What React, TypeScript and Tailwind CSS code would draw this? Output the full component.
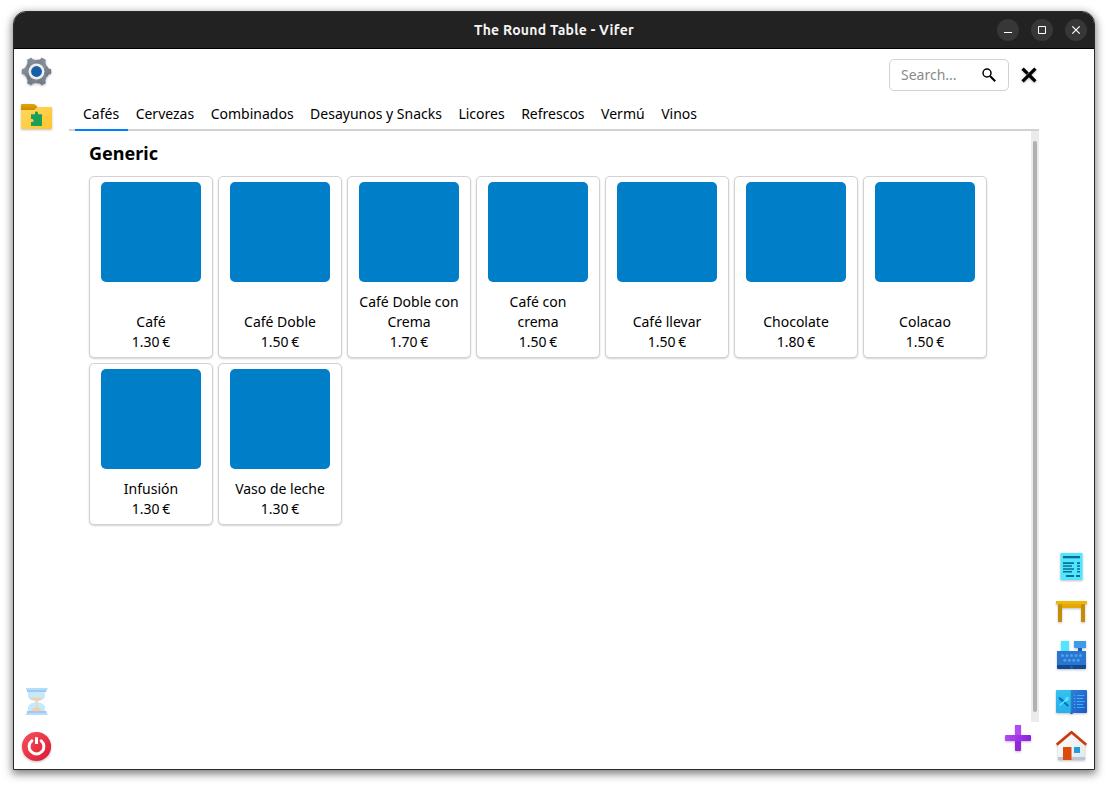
import type { ReactNode } from 'react';

const categories = ['Cafés', 'Cervezas', 'Combinados', 'Desayunos y Snacks', 'Licores', 'Refrescos', 'Vermú', 'Vinos'];

const products = [
  { name: 'Café', price: '1.30 €' },
  { name: 'Café Doble', price: '1.50 €' },
  { name: 'Café Doble con Crema', price: '1.70 €' },
  { name: 'Café con crema', price: '1.50 €' },
  { name: 'Café llevar', price: '1.50 €' },
  { name: 'Chocolate', price: '1.80 €' },
  { name: 'Colacao', price: '1.50 €' },
  { name: 'Infusión', price: '1.30 €' },
  { name: 'Vaso de leche', price: '1.30 €' },
];

function Icon({ children, disabled = false }: { children: ReactNode; disabled?: boolean }) {
  return (
    <svg
      viewBox="0 0 32 32"
      className={`h-8 w-8 shrink-0 overflow-visible ${disabled ? '' : 'drop-shadow-[0_1px_1px_rgba(0,0,0,0.25)]'}`}
    >
      {children}
    </svg>
  );
}

function GearIcon() {
  return (
    <Icon>
      <defs>
        <linearGradient id="gear" x1="0" y1="0" x2="1" y2="1">
          <stop offset="0" stopColor="#8b949e" />
          <stop offset="1" stopColor="#6c7680" />
        </linearGradient>
      </defs>
      <g fill="url(#gear)">
        <circle cx="15.5" cy="15.5" r="11.3" />
        {[0, 60, 120].map((a) => (
          <path
            key={a}
            transform={`rotate(${a} 15.5 15.5)`}
            d="M5 10 L3.3 12.4 L1.2 13 Q.8 13.2 .8 13.8 V17.2 Q.8 17.8 1.2 18 L3.3 18.6 L5 21 H26 L27.7 18.6 L29.8 18 Q30.2 17.8 30.2 17.2 V13.8 Q30.2 13.2 29.8 13 L27.7 12.4 L26 10Z"
          />
        ))}
      </g>
      <circle cx="15.5" cy="15.5" r="8" fill="#ededed" />
      <circle cx="15.5" cy="15.5" r="5.4" fill="#155ea8" />
    </Icon>
  );
}

function FolderIcon() {
  return (
    <Icon>
      <defs>
        <linearGradient id="folder" x1="0" y1="0" x2="1" y2="1">
          <stop offset="0" stopColor="#ffd75e" />
          <stop offset="1" stopColor="#ffc52b" />
        </linearGradient>
        <linearGradient id="folderTab" x1="0" y1="0" x2="0" y2="1">
          <stop offset="0" stopColor="#e5a505" />
          <stop offset="1" stopColor="#c48604" />
        </linearGradient>
      </defs>
      <path fill="url(#folderTab)" d="M1 3H12.5Q13.5 3 14.3 3.8L16.8 6.3L13 10H0V4Q0 3 1 3Z" />
      <path fill="url(#folder)" d="M16.5 6H30Q31 6 31 7V27Q31 28 30 28H1Q0 28 0 27V9H12.5Q13.5 9 14.2 8.2Z" />
      <path
        fill="#1ba05a"
        d="M10 13.2H14V11.8Q14 10.5 15.5 10.5T17 11.8V13.2H21V25H10V21H11.2Q12.6 21 12.6 19.5T11.2 18H10Z"
      />
    </Icon>
  );
}

function HourglassIcon() {
  return (
    <Icon disabled>
      <path fill="#c2ecfd" d="M7 6H24V10Q24 13 20.5 14.3Q18.3 15.2 16.2 15.3V16Q18.3 16.2 20.5 17.2Q24 18.8 24 22V25H7V22Q7 18.8 10.5 17.2Q12.8 16.2 15 16V15.3Q12.8 15.2 10.5 14.3Q7 13 7 10Z" />
      <path fill="#f5cfaa" d="M9 11.5H22Q21.5 13 18.5 14Q16.2 15 16.2 16V21Q20 22 20.8 25H10.2Q11 22 15 21V16Q15 15 12.5 14Q9.5 13 9 11.5Z" />
      <path fill="#b5dcfa" d="M5 2H26.5V4H5ZM5 27H26.5V29H5Z" />
      <path fill="#a4c9ef" d="M6 4H25.5V6H6ZM6 25H25.5V27H6Z" />
    </Icon>
  );
}

function PowerIcon() {
  return (
    <Icon>
      <defs>
        <linearGradient id="power" x1="0" y1="0" x2="1" y2="1">
          <stop offset="0" stopColor="#f8525d" />
          <stop offset="1" stopColor="#dc1730" />
        </linearGradient>
      </defs>
      <circle cx="15.5" cy="15.5" r="14.6" fill="url(#power)" />
      <path fill="none" stroke="#fff" strokeWidth="3" strokeLinecap="round" d="M10.8 9.8A7.4 7.4 0 1 0 20.2 9.8" />
      <path fill="#fff" d="M14 6.2H17V13H14Z" />
    </Icon>
  );
}

function ReceiptIcon() {
  return (
    <Icon>
      <path fill="#50e6ff" d="M5.5 2H27.5V29H5.5Z" />
      <g fill="#086f91">
        <path d="M8 5H25V7.3H8Z" />
        <path d="M8 11.2H19V13H8ZM8 14.3H17V15.7H8ZM8 17.2H19V18.8H8ZM8 20H17V21.4H8ZM11 24H19V26H11ZM21 24H25V26H21Z" />
        <path d="M22 11.2H25V13H22ZM22 14.3H25V15.7H22ZM22 17.2H25V18.8H22ZM22 20H25V21.4H22Z" />
      </g>
    </Icon>
  );
}

function TableIcon() {
  return (
    <Icon>
      <path fill="#e5a505" d="M4 8H27V12H4Z" />
      <path fill="#c48d08" d="M3 8H7V26H3ZM26 8H30V26H26Z" />
      <path fill="#edb60a" d="M1 5H32V8.2H1Z" />
    </Icon>
  );
}

function RegisterIcon() {
  return (
    <Icon>
      <path fill="#50e6ff" d="M6 0H14V10H6Z" />
      <path fill="#1a5cb8" d="M23 6H27V10H23Z" />
      <path fill="#3d9be9" d="M19 0H31V7H20Q19 7 19 6Z" />
      <path fill="#2975d0" d="M2 10H31V24.5H2Z" />
      <path fill="#114a90" d="M2 24H31V27Q31 28 30 28H3Q2 28 2 27Z" />
      <g fill="#4ba3ec">
        {[7.5, 12, 16.5, 21, 25.5].map((x) => (
          <circle key={x} cx={x} cy="14.5" r="1.5" />
        ))}
        {[9.8, 14.3, 18.8, 23.3].map((x) => (
          <circle key={x} cx={x} cy="19.3" r="1.5" />
        ))}
      </g>
      <circle cx="16.5" cy="26.3" r="1.5" fill="#1b65bd" />
    </Icon>
  );
}

function MenuBookIcon() {
  return (
    <Icon>
      <defs>
        <linearGradient id="bookLeft" x1="0" y1="0" x2="0" y2="1">
          <stop offset="0" stopColor="#35c1f1" />
          <stop offset="1" stopColor="#28afea" />
        </linearGradient>
        <linearGradient id="bookRight" x1="0" y1="0" x2="1" y2="1">
          <stop offset="0" stopColor="#327ed9" />
          <stop offset="1" stopColor="#1c58c7" />
        </linearGradient>
      </defs>
      <path fill="#174faf" d="M14.5 25H18.5L17.5 28H15.5Z" />
      <path fill="url(#bookLeft)" d="M2 4H16V27H2Q1 27 1 26V5Q1 4 2 4Z" />
      <path fill="url(#bookRight)" d="M16.5 4H31Q32 4 32 5V26Q32 27 31 27H16.5Z" />
      <path stroke="#197bc4" d="M16.3 4V27" />
      <path stroke="#0669bc" strokeWidth="1.7" strokeLinecap="round" d="M4.5 12L7.5 15L12.7 19.5" />
      <path fill="#0b71c4" d="M4 11L8 13.2L9 15.5L7 16L4.5 14Z" />
      <path stroke="#50e6ff" strokeWidth="1.5" strokeLinecap="round" d="M5 19L11 14" />
      <ellipse cx="12" cy="13" rx="2.3" ry="1.8" fill="#50e6ff" transform="rotate(-45 12 13)" />
      <path stroke="#32b6ee" d="M19 9.5H20.3M22 9.5H29.5M19 12.5H20.3M22 12.5H28M19 15.5H20.3M22 15.5H29.5M19 18.5H20.3M22 18.5H28M19 21.5H20.3M22 21.5H29.5" />
    </Icon>
  );
}

function HomeIcon() {
  return (
    <Icon>
      <defs>
        <linearGradient id="wall" x1="0" y1="0" x2="1" y2="1">
          <stop offset="0" stopColor="#ffffff" />
          <stop offset="1" stopColor="#e3e5e8" />
        </linearGradient>
      </defs>
      <path fill="url(#wall)" d="M3 12L16.5 1L30 12V29H3Z" />
      <path fill="#bbc6d3" d="M3 26H30V29H3Z" />
      <path fill="#dd4b0c" d="M8 16H16.5V29H8Z" />
      <path fill="#1e9fd9" d="M19 16H25V22H19Z" />
      <path fill="none" stroke="#cc3a0c" strokeWidth="2.6" strokeLinejoin="round" strokeLinecap="square" d="M2.8 12.8L16.5 1.2L30.2 12.8" />
    </Icon>
  );
}

function PlusIcon() {
  return (
    <Icon>
      <defs>
        <linearGradient id="plusBar" x1="0" y1="0" x2="1" y2="0">
          <stop offset="0" stopColor="#b44af2" />
          <stop offset="1" stopColor="#8c20dc" />
        </linearGradient>
      </defs>
      <rect x="13" y="3" width="6" height="26" rx="1" fill="#9328d4" />
      <rect x="13" y="3" width="6" height="12" rx="1" fill="#b24bf0" />
      <rect x="3" y="13" width="26" height="6" rx="1" fill="url(#plusBar)" />
    </Icon>
  );
}

function WindowButton({ children }: { children: ReactNode }) {
  return (
    <button className="flex h-[22px] w-[22px] items-center justify-center rounded-full bg-[#373737]">
      <svg viewBox="0 0 22 22" className="h-[22px] w-[22px]" fill="none" stroke="#fff">
        {children}
      </svg>
    </button>
  );
}

function ProductCard({ name, price }: { name: string; price: string }) {
  return (
    <div className="flex w-[124px] flex-col items-center justify-between rounded-[5px] border border-[#d1d1d6] bg-white p-[5px] text-center shadow-[0_1px_2px_rgba(0,0,0,0.18)]">
      <div className="h-[100px] w-[100px] shrink-0 rounded-[5px] bg-[#007fc8]" />
      <div className="mt-[10px] w-[101px] leading-5">
        <div>{name}</div>
        <div className="[word-spacing:-1px]">{price}</div>
      </div>
    </div>
  );
}

export default function App() {
  return (
    <div className="h-[786px] w-[1108px] overflow-hidden bg-white pt-[11px] pl-[13px] font-['Noto_Sans',sans-serif] text-[14px] text-black">
      <div className="flex h-[759px] w-[1082px] flex-col overflow-hidden rounded-t-[13px] border border-[#2b2b2b] bg-white shadow-[0_3px_9px_1px_rgba(0,0,0,0.5)]">
        <header className="grid h-[37px] shrink-0 grid-cols-[1fr_auto_1fr] items-center border-b border-black bg-[#222]">
          <div />
          <h1 className="font-['Ubuntu','Noto_Sans',sans-serif] text-[14px] font-semibold tracking-[0.26px] text-[#f5f5f5]">The Round Table - Vifer</h1>
          <div className="flex justify-end gap-3 pr-[7px]">
            <WindowButton><path d="M7 13.5H15" /></WindowButton>
            <WindowButton><path d="M7.5 7.5H14.5V14.5H7.5Z" /></WindowButton>
            <WindowButton><path strokeWidth="1.2" d="M7.3 7.3L14.7 14.7M14.7 7.3L7.3 14.7" /></WindowButton>
          </div>
        </header>

        <div className="flex min-h-0 flex-1">
          <nav className="flex w-[55px] shrink-0 flex-col justify-between pt-[7px] pb-[6px] pl-[7px]">
            <div className="flex flex-col gap-[13px]">
              <GearIcon />
              <FolderIcon />
            </div>
            <div className="flex flex-col gap-[13px]">
              <HourglassIcon />
              <PowerIcon />
            </div>
          </nav>

          <main className="flex w-[970px] shrink-0 flex-col">
            <div className="flex h-[48px] shrink-0 items-start justify-end gap-3 pt-[10px] pr-[2px]">
              <div className="flex h-8 w-[120px] items-center justify-between rounded-[5px] border border-[#d1d1d6] pr-3 pl-[11px]">
                <span className="pb-[2px] text-[#8a8a8a]">Search...</span>
                <svg viewBox="0 0 14 14" className="h-[14px] w-[14px]" fill="none" stroke="#000">
                  <circle cx="5" cy="5" r="4" strokeWidth="1.5" />
                  <path strokeWidth="2" d="M8 8L13.2 13.2" />
                </svg>
              </div>
              <svg viewBox="0 0 16 16" className="mt-2 h-4 w-4 drop-shadow-[0_1px_1px_rgba(0,0,0,0.25)]" fill="none" stroke="#000" strokeWidth="3.3">
                <path d="M1.6 1.6L6.6 6.6M8 8L14.4 14.4M14.4 1.6L1.6 14.4" />
              </svg>
            </div>

            <div className="flex h-[34px] shrink-0 border-b-2 border-[#d1d1d6] pl-[6px]">
              {categories.map((category, index) => (
                <button
                  key={category}
                  className={`-mb-[2px] border-b-2 pr-[8.5px] pl-2 whitespace-nowrap ${index === 0 ? 'border-[#007fff]' : 'border-transparent'}`}
                >
                  {category}
                </button>
              ))}
            </div>

            <div className="flex h-[591px] shrink-0">
              <section className="flex-1 pt-[9px] pl-5">
                <h2 className="h-[36px] text-[18px] leading-[26px] font-bold">Generic</h2>
                <div className="flex flex-wrap gap-[5px]">
                  {products.map((product) => (
                    <ProductCard key={product.name} {...product} />
                  ))}
                </div>
              </section>
              <div className="w-2 shrink-0 bg-[#ebebeb] px-[2px] py-[10px]">
                <div className="h-full rounded-full bg-[#b0b0b2]" />
              </div>
            </div>

            <div className="flex justify-end pr-[5px]">
              <PlusIcon />
            </div>
          </main>

          <nav className="flex flex-1 flex-col items-end justify-end gap-[13px] pr-[7px] pb-[6px]">
            <ReceiptIcon />
            <TableIcon />
            <RegisterIcon />
            <MenuBookIcon />
            <HomeIcon />
          </nav>
        </div>
      </div>
    </div>
  );
}
